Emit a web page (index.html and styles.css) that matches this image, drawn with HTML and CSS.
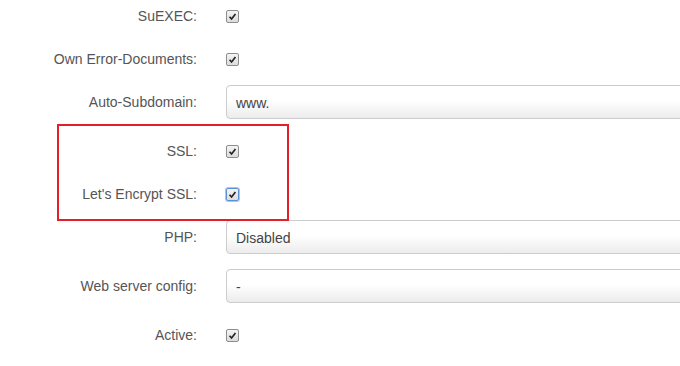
FILE: index.html
```html
<!DOCTYPE html>
<html lang="en">
<head>
    <meta charset="UTF-8">
    <title>Domain settings</title>
    <link rel="stylesheet" href="styles.css">
</head>
<body>
<form class="domain-form">
    <div class="form-row check-row">
        <label class="row-label">SuEXEC:</label>
        <div class="row-control"><span class="check"><svg viewBox="0 0 13 13"><path d="M3 6.8 L5.4 9.4 L10 3.6" /></svg></span></div>
    </div>

    <div class="form-row check-row">
        <label class="row-label">Own Error-Documents:</label>
        <div class="row-control"><span class="check"><svg viewBox="0 0 13 13"><path d="M3 6.8 L5.4 9.4 L10 3.6" /></svg></span></div>
    </div>

    <div class="form-row">
        <label class="row-label">Auto-Subdomain:</label>
        <div class="row-control"><div class="field">www.</div></div>
    </div>

    <!-- markierter Bereich -->
    <div class="highlight">
        <div class="form-row check-row">
            <label class="row-label">SSL:</label>
            <div class="row-control"><span class="check"><svg viewBox="0 0 13 13"><path d="M3 6.8 L5.4 9.4 L10 3.6" /></svg></span></div>
        </div>

        <div class="form-row check-row">
            <label class="row-label">Let's Encrypt SSL:</label>
            <div class="row-control"><span class="check focus"><svg viewBox="0 0 13 13"><path d="M3 6.8 L5.4 9.4 L10 3.6" /></svg></span></div>
        </div>
    </div>

    <div class="form-row">
        <label class="row-label">PHP:</label>
        <div class="row-control"><div class="field">Disabled</div></div>
    </div>

    <div class="form-row">
        <label class="row-label">Web server config:</label>
        <div class="row-control"><div class="field">-</div></div>
    </div>

    <div class="form-row check-row">
        <label class="row-label">Active:</label>
        <div class="row-control"><span class="check"><svg viewBox="0 0 13 13"><path d="M3 6.8 L5.4 9.4 L10 3.6" /></svg></span></div>
    </div>
</form>
</body>
</html>
```

FILE: styles.css
```css
* {
    margin: 0;
    padding: 0;
    box-sizing: border-box;
}

body {
    font-family: "Liberation Sans", Arial, sans-serif;
    font-size: 14px;
    color: #555;
    background: #fff;
    overflow: hidden;
}

.domain-form {
    margin-top: -1px;
}

.form-row {
    display: flex;
    align-items: flex-start;
    margin-bottom: 15px;
}

.check-row {
    min-height: 28px;
}

.row-label {
    width: 197px;
    flex-shrink: 0;
    text-align: right;
    padding-top: 7px;
    line-height: 20px;
}

.row-control {
    margin-left: 29px;
    flex-shrink: 0;
}

.check-row .row-control {
    padding-top: 11px;
}

/* Checkbox */
.check {
    display: block;
    width: 13px;
    height: 13px;
    border: 1px solid #8e8e8e;
    border-radius: 2px;
    background: linear-gradient(#f4f4f4, #dcdcdc);
}

.check svg {
    display: block;
    width: 11px;
    height: 11px;
}

.check path {
    fill: none;
    stroke: #222;
    stroke-width: 2;
}

.check.focus {
    border-color: #5b8fd8;
    box-shadow: 0 0 0 1px #a9c6f0;
}

/* Eingabefeld */
.field {
    width: 500px;
    height: 34px;
    padding: 7px 9px;
    line-height: 20px;
    color: #444;
    border: 1px solid #ccc;
    border-radius: 4px;
    background: linear-gradient(#fff 45%, #ececec);
}

/* roter Rahmen */
.highlight {
    position: relative;
}

.highlight::before {
    content: "";
    position: absolute;
    top: -10px;
    bottom: -16px;
    left: 57px;
    width: 228px;
    border: 2px solid #e3202a;
    z-index: 2;
}
```
